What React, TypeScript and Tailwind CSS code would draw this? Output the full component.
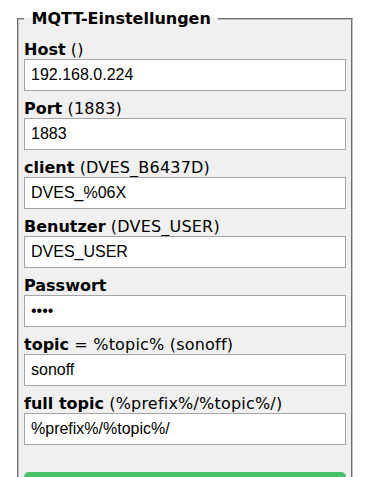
import React from 'react';

const fields = [
  { key: 'host', label: 'Host', note: ' ()', value: '192.168.0.224', type: 'text' },
  { key: 'port', label: 'Port', note: ' (1883)', value: '1883', type: 'text' },
  { key: 'client', label: 'client', note: ' (DVES_B6437D)', value: 'DVES_%06X', type: 'text' },
  { key: 'user', label: 'Benutzer', note: ' (DVES_USER)', value: 'DVES_USER', type: 'text' },
  { key: 'pass', label: 'Passwort', note: '', value: '****', type: 'password' },
  { key: 'topic', label: 'topic', note: ' = %topic% (sonoff)', value: 'sonoff', type: 'text' },
  { key: 'full', label: 'full topic', note: ' (%prefix%/%topic%/)', value: '%prefix%/%topic%/', type: 'text' },
];

export default function App() {
  return (
    <div className="min-h-screen bg-white text-black font-['Verdana','DejaVu_Sans',sans-serif] text-[16px]">
      <div className="pl-[17px] pt-[9px] w-[353px]">
        <fieldset className="border-2 [border-style:groove] border-[#c0c0c0] bg-[#f0f0f0] px-[5px] pt-[12px] pb-[10px]">
          <legend className="px-[2px] font-bold leading-[19px]">&nbsp;MQTT-Einstellungen&nbsp;</legend>
          <div className="flex flex-col gap-[8px]">
            {fields.map((f) => (
              <div key={f.key} className="flex flex-col">
                <div className="leading-[19px] whitespace-pre">
                  <b>{f.label}</b>
                  <span className="tracking-[0.2px]">{f.note}</span>
                </div>
                <input
                  type={f.type}
                  defaultValue={f.value}
                  readOnly
                  className="h-[32px] w-full border border-[#a5a5a5] bg-white px-[6px] font-['Liberation_Sans','Arial',sans-serif] text-[16px] text-black outline-none"
                />
              </div>
            ))}
          </div>
          <div className="h-[27px]" />
          <button className="h-[38px] w-full rounded-[5px] bg-[#47c266] text-white font-['Liberation_Sans','Arial',sans-serif] text-[19px]">
            Speichern
          </button>
        </fieldset>
      </div>
    </div>
  );
}
